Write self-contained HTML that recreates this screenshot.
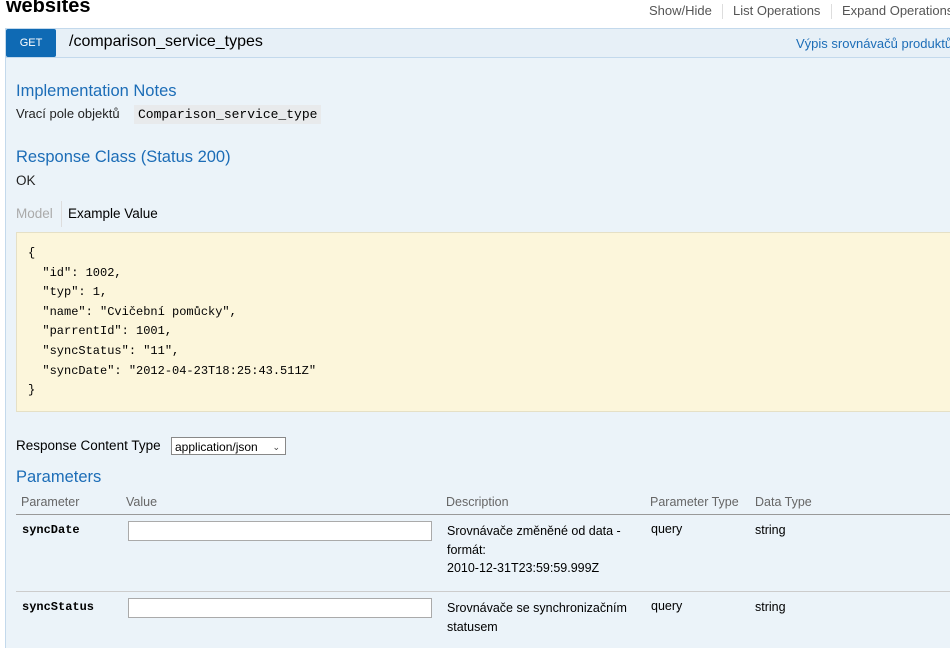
<!DOCTYPE html>
<html><head><meta charset="utf-8"><style>
body{margin:0;width:950px;height:640px;overflow:hidden;background:#fff;font-family:"Liberation Sans",sans-serif;position:relative;color:#222}
.a{position:absolute;white-space:nowrap}
.h{color:#1c6db7;font-size:16.5px}
.t{font-size:13.5px;color:#222}
.mono{font-family:"Liberation Mono",monospace;font-size:12px}
.inp{position:absolute;background:#fff;border:1px solid #aaa;height:18px;box-sizing:border-box}
</style></head><body>
<div class="a" style="left:6px;top:-5px;font-size:20px;font-weight:bold;color:#000">websites</div>
<div class="a t" style="left:649px;top:3px;color:#555;font-size:13px">Show/Hide</div>
<div class="a" style="left:722px;top:4px;width:1px;height:15px;background:#ddd"></div>
<div class="a t" style="left:733px;top:3px;color:#555;font-size:13px">List Operations</div>
<div class="a" style="left:831px;top:4px;width:1px;height:15px;background:#ddd"></div>
<div class="a t" style="left:842px;top:3px;color:#555;font-size:13px">Expand Operations</div>

<div class="a" style="left:5px;top:28px;width:950px;height:620px;background:#ebf3f9;border-left:1px solid #c3d9ec"></div>
<div class="a" style="left:5px;top:28px;width:950px;height:28px;background:#e7f0f7;border-top:1px solid #c3d9ec;border-bottom:1px solid #c3d9ec;border-left:1px solid #c3d9ec"></div>
<div class="a" style="left:6px;top:29px;width:50px;height:28px;background:#0f6ab4;border-radius:2px;color:#fff;font-size:11px;line-height:29px;text-align:center">GET</div>
<div class="a" style="left:69px;top:33px;font-size:16px;color:#000">/comparison_service_types</div>
<div class="a" style="left:796px;top:36px;font-size:13px;color:#1c6db7">Výpis srovnávačů produktů</div>

<div class="a h" style="left:16px;top:82px">Implementation Notes</div>
<div class="a t" style="left:16px;top:106px;font-size:13px">Vrací pole objektů</div>
<div class="a mono" style="left:134px;top:105px;background:#e8eaec;padding:2px 4px;font-size:13px;color:#000">Comparison_service_type</div>
<div class="a h" style="left:16px;top:148px">Response Class (Status 200)</div>
<div class="a t" style="left:16px;top:173px">OK</div>
<div class="a t" style="left:16px;top:206px;color:#aaa">Model</div>
<div class="a" style="left:61px;top:201px;width:1px;height:26px;background:#ddd"></div>
<div class="a t" style="left:68px;top:206px;color:#000">Example Value</div>

<div class="a" style="left:16px;top:232px;width:940px;height:178px;background:#fcf6db;border:1px solid #e5e0c6"></div>
<pre class="a mono" style="left:28px;top:244px;margin:0;line-height:19.6px;color:#000;white-space:pre">{
  "id": 1002,
  "typ": 1,
  "name": "Cvičební pomůcky",
  "parrentId": 1001,
  "syncStatus": "11",
  "syncDate": "2012-04-23T18:25:43.511Z"
}</pre>

<div class="a t" style="left:16px;top:438px;color:#000">Response Content Type</div>
<div class="a" style="left:171px;top:437px;width:115px;height:18px;border:1px solid #888;background:#fff;font-size:12px;line-height:18px;padding-left:3px;box-sizing:border-box;color:#000">application/json <span style="position:absolute;right:5px;font-size:9px;color:#444">&#8964;</span></div>
<div class="a h" style="left:16px;top:468px">Parameters</div>
<div class="a" style="left:21px;top:495px;font-size:12.5px;color:#666">Parameter</div>
<div class="a" style="left:126px;top:495px;font-size:12.5px;color:#666">Value</div>
<div class="a" style="left:446px;top:495px;font-size:12.5px;color:#666">Description</div>
<div class="a" style="left:650px;top:495px;font-size:12.5px;color:#666">Parameter Type</div>
<div class="a" style="left:755px;top:495px;font-size:12.5px;color:#666">Data Type</div>
<div class="a" style="left:16px;top:514px;width:940px;height:1px;background:#999"></div>

<div class="a mono" style="left:22px;top:523px;font-weight:bold;color:#000">syncDate</div>
<div class="inp" style="left:128px;top:521px;width:304px;height:20px"></div>
<div class="a" style="left:447px;top:522px;font-size:12.5px;line-height:18.5px;color:#000;white-space:normal;width:195px">Srovnávače změněné od data - formát:<br>2010-12-31T23:59:59.999Z</div>
<div class="a" style="left:651px;top:522px;font-size:12.5px;color:#000">query</div>
<div class="a" style="left:755px;top:523px;font-size:12.5px;color:#000">string</div>
<div class="a" style="left:16px;top:591px;width:940px;height:1px;background:#ccc"></div>

<div class="a mono" style="left:22px;top:600px;font-weight:bold;color:#000">syncStatus</div>
<div class="inp" style="left:128px;top:598px;width:304px;height:20px"></div>
<div class="a" style="left:447px;top:599px;font-size:12.5px;line-height:18.5px;color:#000">Srovnávače se synchronizačním<br>statusem</div>
<div class="a" style="left:651px;top:599px;font-size:12.5px;color:#000">query</div>
<div class="a" style="left:755px;top:600px;font-size:12.5px;color:#000">string</div>
</body></html>
